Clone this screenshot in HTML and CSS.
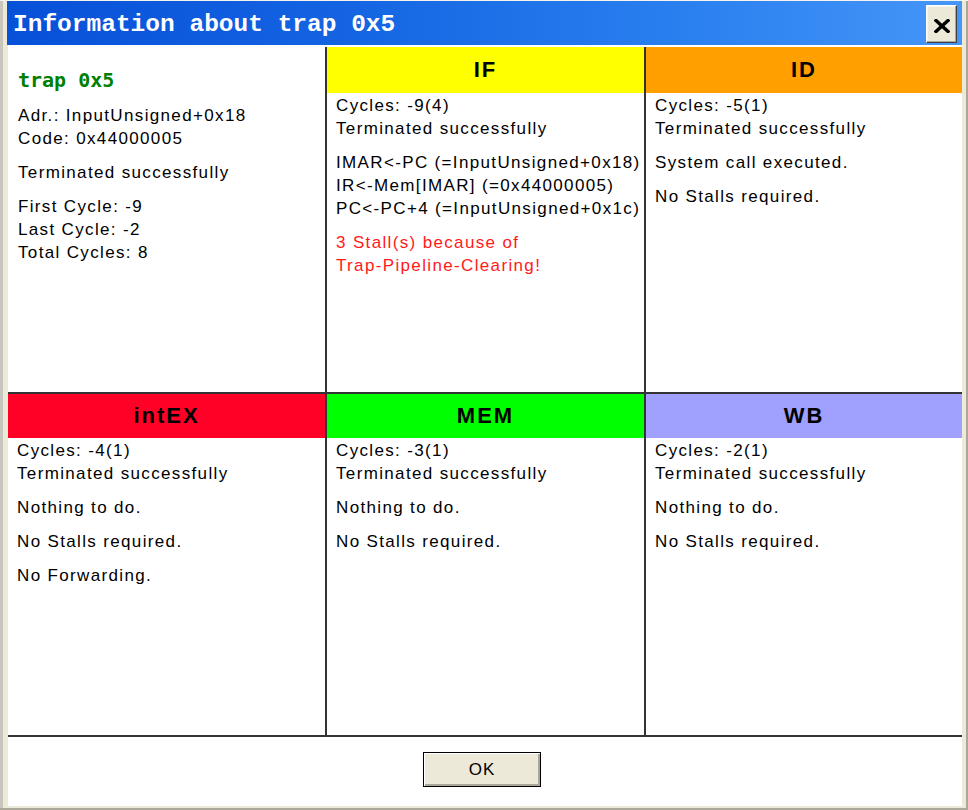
FILE: index.html
```html
<!DOCTYPE html>
<html>
<head>
<meta charset="utf-8">
<link rel="stylesheet" href="styles.css">
</head>
<body>
<div class="window">
  <div class="titlebar">
    <span class="title">Information about trap 0x5</span>
    <button class="close" aria-label="Close">
      <svg width="16" height="14" viewBox="0 0 16 14"><path d="M2 1.5 L14 12.5 M14 1.5 L2 12.5" stroke="#000" stroke-width="3.4" stroke-linecap="square" fill="none"/></svg>
    </button>
  </div>
  <div class="client">
    <div class="grid">
      <div class="cell info">
        <p class="trap">trap 0x5</p>
        <p>Adr.: InputUnsigned+0x18<br>Code: 0x44000005</p>
        <p>Terminated successfully</p>
        <p>First Cycle: -9<br>Last Cycle: -2<br>Total Cycles: 8</p>
      </div>
      <div class="cell">
        <div class="head top if">IF</div>
        <div class="body">
          <p>Cycles: -9(4)<br>Terminated successfully</p>
          <p>IMAR&lt;-PC (=InputUnsigned+0x18)<br>IR&lt;-Mem[IMAR] (=0x44000005)<br>PC&lt;-PC+4 (=InputUnsigned+0x1c)</p>
          <p class="warn">3 Stall(s) because of<br>Trap-Pipeline-Clearing!</p>
        </div>
      </div>
      <div class="cell">
        <div class="head top id">ID</div>
        <div class="body">
          <p>Cycles: -5(1)<br>Terminated successfully</p>
          <p>System call executed.</p>
          <p>No Stalls required.</p>
        </div>
      </div>
      <div class="cell">
        <div class="head bottom ex">intEX</div>
        <div class="body">
          <p>Cycles: -4(1)<br>Terminated successfully</p>
          <p>Nothing to do.</p>
          <p>No Stalls required.</p>
          <p>No Forwarding.</p>
        </div>
      </div>
      <div class="cell">
        <div class="head bottom mem">MEM</div>
        <div class="body">
          <p>Cycles: -3(1)<br>Terminated successfully</p>
          <p>Nothing to do.</p>
          <p>No Stalls required.</p>
        </div>
      </div>
      <div class="cell">
        <div class="head bottom wb">WB</div>
        <div class="body">
          <p>Cycles: -2(1)<br>Terminated successfully</p>
          <p>Nothing to do.</p>
          <p>No Stalls required.</p>
        </div>
      </div>
    </div>
    <div class="actions">
      <button class="ok">OK</button>
    </div>
  </div>
</div>
</body>
</html>
```

FILE: styles.css
```css
html, body {
  margin: 0;
  padding: 0;
  background: #ECE9D8;
}

.window {
  width: 968px;
  height: 810px;
  box-sizing: border-box;
  background: #ECE9D8;
  border-top: 1px solid #f4f3ee;
  padding: 0 6px 4px 7px;
  display: flex;
  flex-direction: column;
  box-shadow: inset -2px -2px 0 #ACA899, inset 3px 0 0 #c8c6bc;
}

.titlebar {
  height: 44px;
  flex: none;
  display: flex;
  align-items: center;
  justify-content: space-between;
  padding: 0 5px 0 6px;
  background: linear-gradient(to right, #0750d8 0%, #1464e2 35%, #2a7fef 70%, #4596f8 100%);
}

.title {
  font-family: "Liberation Mono", "DejaVu Sans Mono", monospace;
  font-weight: bold;
  font-size: 24.5px;
  color: #fff;
  margin-top: 3px;
}

.close {
  width: 31px;
  height: 38px;
  margin-top: 2px;
  padding: 0;
  display: flex;
  align-items: center;
  justify-content: center;
  background: #ECE9D8;
  border: 1px solid;
  border-color: #fff #404040 #404040 #fff;
  box-shadow: inset -1px -1px 0 #ACA899, inset 1px 1px 0 #F5F4EE;
}

.close svg {
  margin-top: 3px;
}

.client {
  flex: 1;
  margin-left: 1px;
  background: #fff;
  padding-top: 2px;
  display: flex;
  flex-direction: column;
  font-family: "Liberation Sans", Arial, sans-serif;
  font-size: 17px;
  letter-spacing: 1.35px;
  color: #000;
}

.grid {
  display: grid;
  grid-template-columns: 317px 317px 316px;
  grid-template-rows: 345px 341px;
  gap: 2px;
  background: #333;
  border-bottom: 2px solid #333;
}

.cell {
  background: #fff;
  display: flex;
  flex-direction: column;
  min-width: 0;
}

.cell p {
  margin: 0 0 11px 0;
  line-height: 23px;
  white-space: nowrap;
}

.info {
  padding: 22px 10px 0 10px;
}

.info .trap {
  font-family: "DejaVu Sans Mono", "Liberation Mono", monospace;
  font-weight: bold;
  font-size: 20px;
  letter-spacing: 0;
  color: #008000;
  margin-bottom: 12px;
}

.head {
  display: flex;
  align-items: center;
  justify-content: center;
  font-weight: bold;
  font-size: 22px;
  letter-spacing: 2px;
  flex: none;
}

.head.top { height: 46px; }
.head.bottom { height: 44px; }

.if { background: #FFFF00; }
.id { background: #FFA000; }
.ex { background: #FF0026; }
.mem { background: #00FF00; }
.wb { background: #A0A0FF; }

.body {
  padding: 1px 9px 0 9px;
}

.warn {
  color: #FF1A1A;
}

.actions {
  flex: 1;
  display: flex;
  justify-content: center;
  align-items: flex-start;
  padding-top: 15px;
  padding-right: 6px;
}

.ok {
  width: 118px;
  height: 35px;
  background: #ECE9D8;
  border: 1px solid #000;
  box-shadow: inset 1px 1px 0 #fff, inset -2px -2px 0 #ACA899;
  font-family: "Liberation Sans", Arial, sans-serif;
  font-size: 17px;
  letter-spacing: 1px;
  color: #000;
  padding: 0;
}
```
